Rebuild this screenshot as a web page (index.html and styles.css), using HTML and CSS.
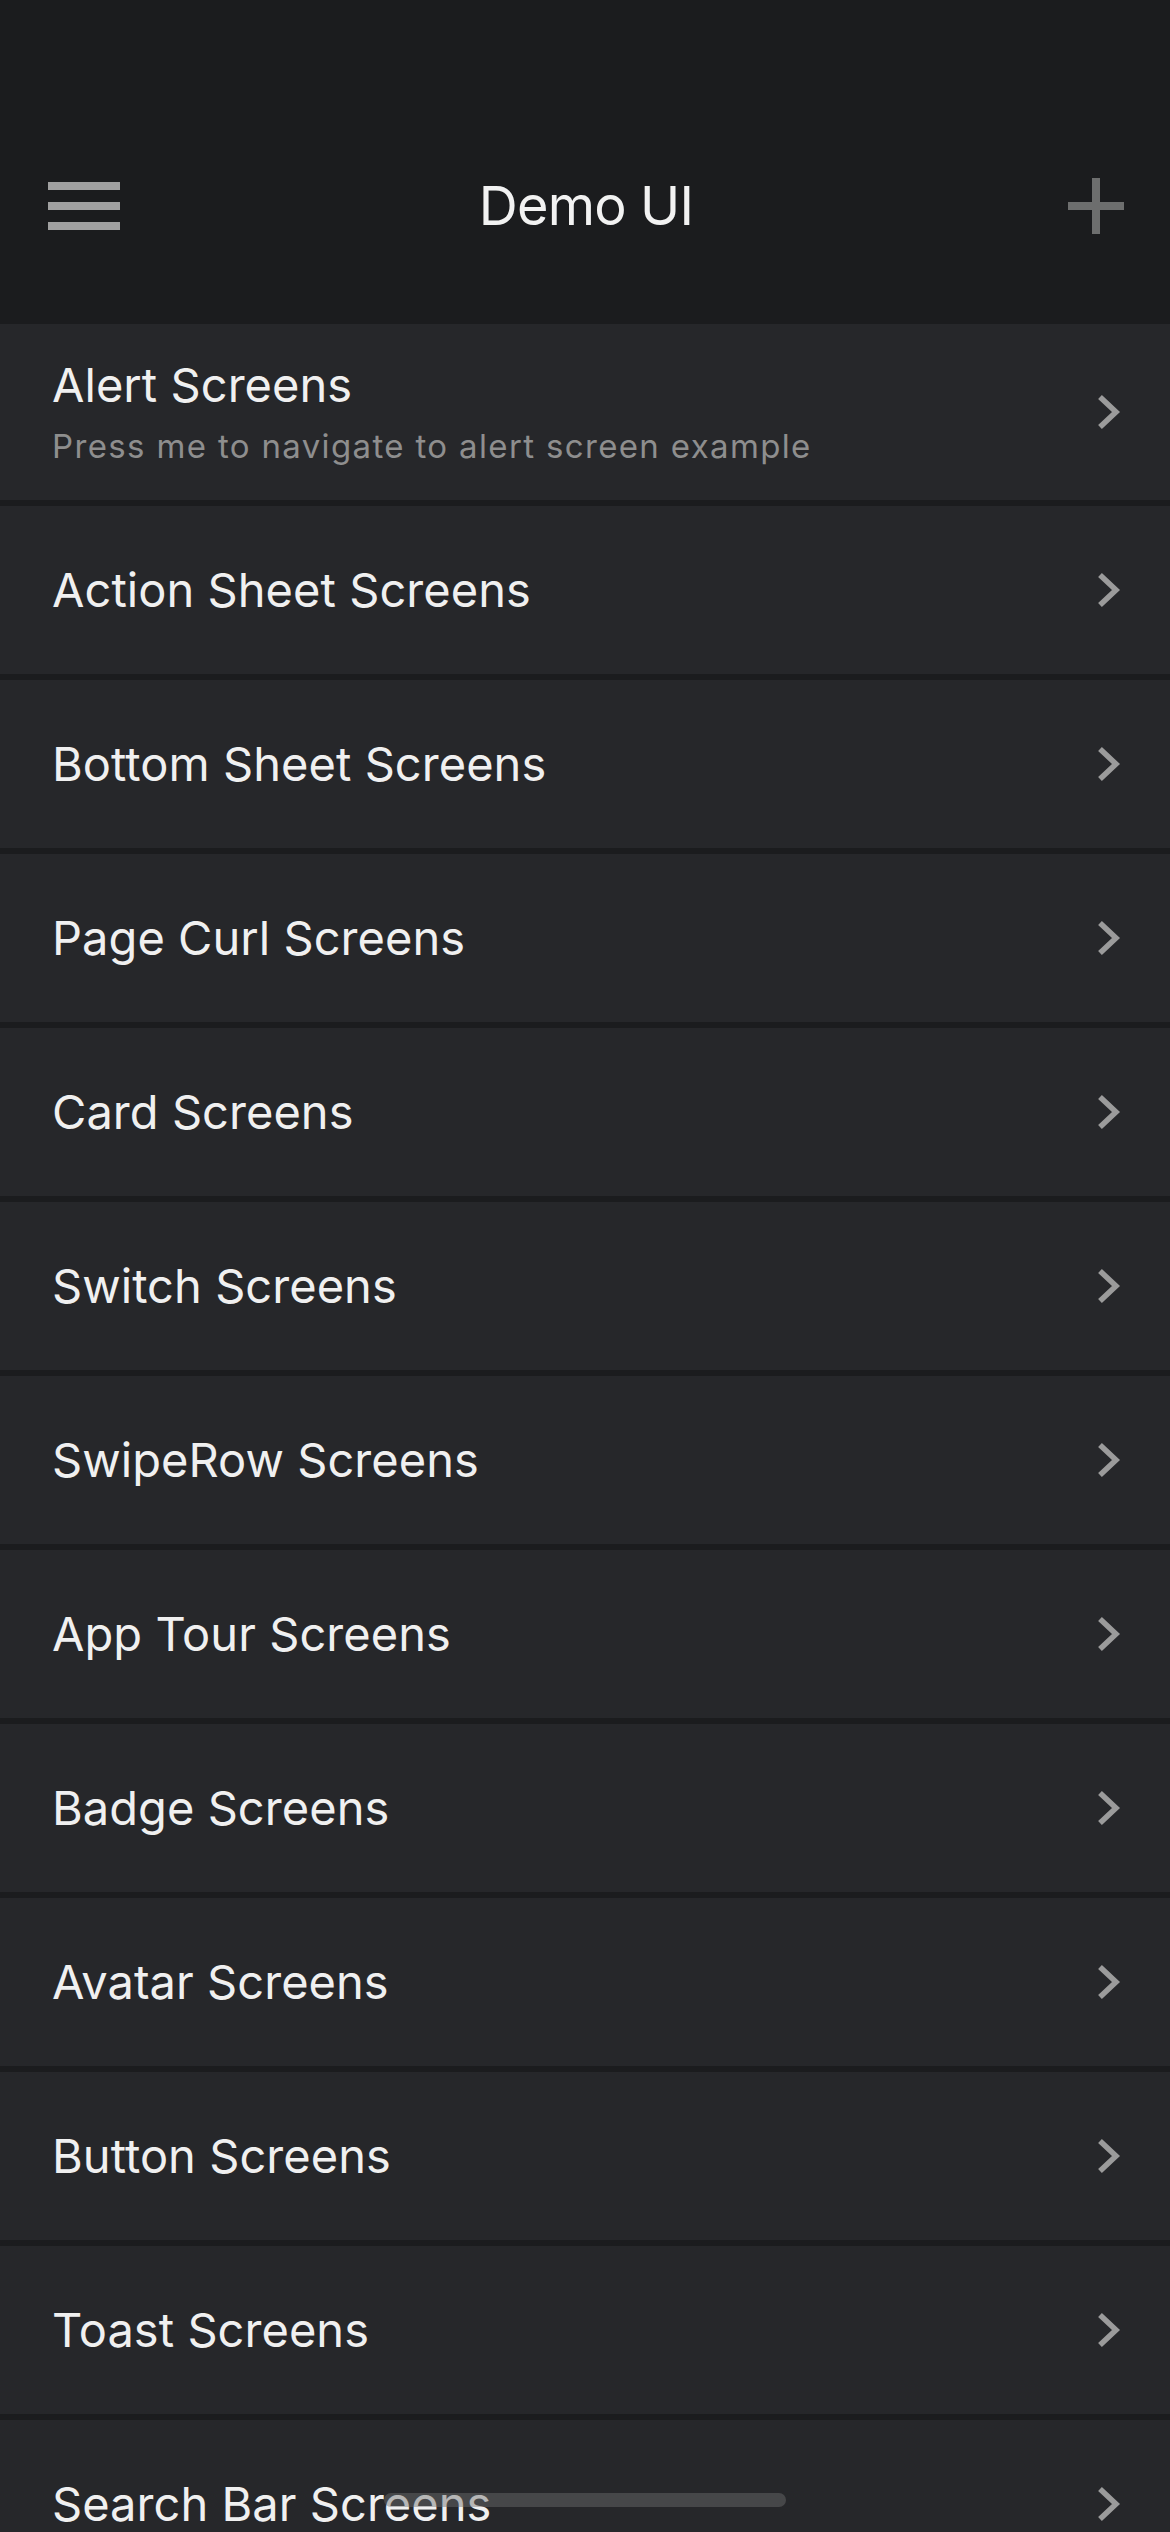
FILE: index.html
```html
<!DOCTYPE html>
<html>
<head>
<meta charset="utf-8">
<link rel="stylesheet" href="styles.css">
</head>
<body>
<div class="screen">
  <header class="header">
    <div class="nav">
      <div class="nav-left">
        <div class="burger"><span></span><span></span><span></span></div>
      </div>
      <div class="nav-title">Demo UI</div>
      <div class="nav-right">
        <div class="plus"></div>
      </div>
    </div>
  </header>
  <div class="list">
    <div class="row row-tall">
      <div class="row-text">
        <div class="row-title">Alert Screens</div>
        <div class="row-sub">Press me to navigate to alert screen example</div>
      </div>
      <svg class="chev" viewBox="0 0 24 36"><polyline points="3,3 19,18 3,33"/></svg>
    </div>
    <div class="row"><div class="row-title">Action Sheet Screens</div><svg class="chev" viewBox="0 0 24 36"><polyline points="3,3 19,18 3,33"/></svg></div>
    <div class="row"><div class="row-title">Bottom Sheet Screens</div><svg class="chev" viewBox="0 0 24 36"><polyline points="3,3 19,18 3,33"/></svg></div>
    <div class="row"><div class="row-title">Page Curl Screens</div><svg class="chev" viewBox="0 0 24 36"><polyline points="3,3 19,18 3,33"/></svg></div>
    <div class="row"><div class="row-title">Card Screens</div><svg class="chev" viewBox="0 0 24 36"><polyline points="3,3 19,18 3,33"/></svg></div>
    <div class="row"><div class="row-title">Switch Screens</div><svg class="chev" viewBox="0 0 24 36"><polyline points="3,3 19,18 3,33"/></svg></div>
    <div class="row"><div class="row-title">SwipeRow Screens</div><svg class="chev" viewBox="0 0 24 36"><polyline points="3,3 19,18 3,33"/></svg></div>
    <div class="row"><div class="row-title">App Tour Screens</div><svg class="chev" viewBox="0 0 24 36"><polyline points="3,3 19,18 3,33"/></svg></div>
    <div class="row"><div class="row-title">Badge Screens</div><svg class="chev" viewBox="0 0 24 36"><polyline points="3,3 19,18 3,33"/></svg></div>
    <div class="row"><div class="row-title">Avatar Screens</div><svg class="chev" viewBox="0 0 24 36"><polyline points="3,3 19,18 3,33"/></svg></div>
    <div class="row"><div class="row-title">Button Screens</div><svg class="chev" viewBox="0 0 24 36"><polyline points="3,3 19,18 3,33"/></svg></div>
    <div class="row"><div class="row-title">Toast Screens</div><svg class="chev" viewBox="0 0 24 36"><polyline points="3,3 19,18 3,33"/></svg></div>
    <div class="row"><div class="row-title">Search Bar Screens</div><svg class="chev" viewBox="0 0 24 36"><polyline points="3,3 19,18 3,33"/></svg></div>
  </div>
  <div class="home-indicator"></div>
</div>
</body>
</html>
```

FILE: styles.css
```css
html, body {
  margin: 0;
  padding: 0;
  background: #26272a;
}
.screen {
  position: relative;
  width: 1170px;
  height: 2532px;
  overflow: hidden;
  font-family: Inter, "Liberation Sans", sans-serif;
  background: #26272a;
}
.header {
  background: #1b1c1e;
  padding-top: 140px;
  padding-bottom: 52px;
}
.nav {
  height: 132px;
  display: grid;
  grid-template-columns: 1fr auto 1fr;
  align-items: center;
  padding: 0 46px 0 48px;
}
.nav-left {
  display: flex;
  justify-content: flex-start;
}
.nav-right {
  display: flex;
  justify-content: flex-end;
}
.burger {
  width: 72px;
  display: flex;
  flex-direction: column;
  gap: 12px;
}
.burger span {
  display: block;
  height: 8px;
  background: #a0a0a0;
}
.plus {
  position: relative;
  width: 56px;
  height: 56px;
}
.plus::before, .plus::after {
  content: "";
  position: absolute;
  background: #6d6e6e;
}
.plus::before {
  left: 0;
  right: 0;
  top: 24px;
  height: 8px;
}
.plus::after {
  top: 0;
  bottom: 0;
  left: 24px;
  width: 8px;
}
.nav-title {
  color: #f2f2f2;
  font-size: 54px;
  line-height: 66px;
  letter-spacing: -0.8px;
}
.list {
  display: flex;
  flex-direction: column;
  gap: 6px;
  background: #1b1c1e;
}
.row {
  height: 168px;
  flex: none;
  background: #26272a;
  display: flex;
  align-items: center;
  justify-content: space-between;
  padding: 0 49px 0 52px;
}
.row-tall {
  height: 176px;
}
.row-text {
  display: flex;
  flex-direction: column;
}
.row-title {
  color: #f0f0f0;
  font-size: 47px;
  line-height: 54px;
  letter-spacing: 0.05px;
}
.row-sub {
  color: #8e8e8e;
  font-size: 33px;
  line-height: 40px;
  margin-top: 14px;
  letter-spacing: 1.35px;
}
.chev {
  width: 24px;
  height: 36px;
  flex: none;
}
.chev polyline {
  fill: none;
  stroke: #9b9b9b;
  stroke-width: 5.5;
  stroke-linejoin: miter;
  stroke-linecap: butt;
}
.home-indicator {
  position: absolute;
  left: 384px;
  top: 2493px;
  width: 402px;
  height: 14px;
  border-radius: 7px;
  background: rgba(110, 110, 110, 0.45);
}
```
